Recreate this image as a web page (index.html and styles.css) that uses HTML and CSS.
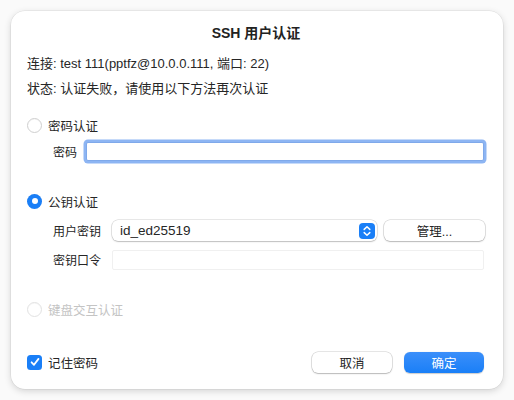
FILE: index.html
```html
<!DOCTYPE html>
<html lang="zh">
<head>
<meta charset="utf-8">
<link rel="stylesheet" href="styles.css">
</head>
<body>
<div class="dialog">
  <div class="title">SSH 用户认证</div>
  <div class="info first">连接: test 111(pptfz@10.0.0.111, 端口: 22)</div>
  <div class="info">状态: 认证失败，请使用以下方法再次认证</div>

  <div class="section s1">
    <div class="choice"><span class="radio"></span><span>密码认证</span></div>
    <div class="field f-pw"><span class="label">密码</span><div class="input focus"></div></div>
  </div>

  <div class="section s2">
    <div class="choice"><span class="radio on"></span><span>公钥认证</span></div>
    <div class="field f-key">
      <span class="label">用户密钥</span>
      <div class="select"><span>id_ed25519</span>
        <span class="stepper"><svg width="16" height="16" viewBox="0 0 16 16"><path d="M5.2 6.4 8 3.8l2.8 2.6M5.2 9.6 8 12.2l2.8-2.6" fill="none" stroke="#fff" stroke-width="1.5" stroke-linecap="round" stroke-linejoin="round"/></svg></span>
      </div>
      <div class="btn manage">管理...</div>
    </div>
    <div class="field f-phrase"><span class="label">密钥口令</span><div class="input plain"></div></div>
  </div>

  <div class="section s3">
    <div class="choice disabled"><span class="radio"></span><span>键盘交互认证</span></div>
  </div>

  <div class="footer">
    <div class="check-row"><span class="checkbox"><svg width="14" height="14" viewBox="0 0 14 14"><path d="M3.6 7.3 6 9.8 10.5 3.9" fill="none" stroke="#fff" stroke-width="1.8" stroke-linecap="round" stroke-linejoin="round"/></svg></span><span>记住密码</span></div>
    <div class="buttons">
      <div class="btn cancel">取消</div>
      <div class="btn ok">确定</div>
    </div>
  </div>
</div>
</body>
</html>
```

FILE: styles.css
```css
* { box-sizing: border-box; }
html, body { margin: 0; padding: 0; background: #fafafa; }
body {
  width: 514px; height: 400px;
  font-family: "Liberation Sans", "Noto Sans CJK SC", sans-serif;
  font-size: 12px;
  color: #262626;
  padding: 11px;
}
.dialog {
  width: 492px; height: 378px;
  background: #fff;
  border-radius: 14px;
  box-shadow: 0 0 0 0.5px rgba(0,0,0,0.08), 0 2px 7px rgba(0,0,0,0.16);
  padding: 14px 18px 17px 16px;
  display: flex; flex-direction: column;
}
.title {
  text-align: center; font-weight: bold; font-size: 14px;
  line-height: 16px; height: 16px; color: #222;
}
.info { height: 20px; line-height: 20px; margin-top: 5px; font-size: 13px; }
.info.first { margin-top: 13px; }
.section { display: flex; flex-direction: column; }
.s1 { margin-top: 16px; }
.s2 { margin-top: 29px; }
.s3 { margin-top: 29px; }
.choice { display: flex; align-items: center; height: 20px; gap: 6px; font-size: 12.5px; }
.radio {
  width: 15px; height: 15px; border-radius: 50%;
  border: 1px solid #cfcfcf; background: #fff;
  box-shadow: inset 0 0.5px 1px rgba(0,0,0,0.05);
}
.radio.on {
  border: none; background: #1a7ff7;
  display: flex; align-items: center; justify-content: center;
}
.radio.on::after {
  content: ""; width: 6px; height: 6px; border-radius: 50%; background: #fff;
}
.choice.disabled { color: #c4c4c4; }
.choice.disabled .radio { border-color: #e2e2e2; }
.field { display: flex; align-items: center; padding-left: 26px; font-size: 12px; }
.f-pw { margin-top: 6px; height: 21px; gap: 9px; }
.f-key { margin-top: 9px; height: 21px; gap: 11px; }
.f-phrase { margin-top: 8px; height: 21px; gap: 11px; }
.label { white-space: nowrap; }
.input { flex: 1; height: 20px; background: #fff; }
.input.focus {
  height: 19px; margin-right: 1px;
  border: 1px solid #7fa9ea;
  box-shadow: 0 0 0 2.5px #8db5f3;
  border-radius: 2px;
}
.input.plain { border: 1px solid #f0f0f0; border-radius: 2px; margin-right: 1px; }
.select {
  width: 265px; height: 21px; flex: none;
  border-radius: 6px; background: #fff;
  box-shadow: 0 0 0 0.5px rgba(0,0,0,0.18), 0 1px 1.5px rgba(0,0,0,0.18);
  display: flex; align-items: center; justify-content: space-between;
  padding: 0 2px 0 8px; font-size: 13.5px;
}
.stepper {
  width: 16px; height: 16px; border-radius: 4px; background: #1a7ff7;
  display: flex;
}
.btn {
  height: 21px; border-radius: 6px;
  display: flex; align-items: center; justify-content: center;
  font-size: 12.5px;
}
.manage, .cancel {
  background: #fff;
  box-shadow: 0 0 0 0.5px rgba(0,0,0,0.2), 0 1px 1.5px rgba(0,0,0,0.2);
}
.manage { width: 101px; margin-left: -4px; }
.footer {
  margin-top: auto; height: 20px;
  display: flex; align-items: center; justify-content: space-between;
  font-size: 12.5px;
}
.check-row { display: flex; align-items: center; gap: 6px; }
.checkbox {
  width: 15px; height: 15px; border-radius: 3.5px; background: #1a7ff7;
  display: flex; align-items: center; justify-content: center;
}
.buttons { display: flex; gap: 12px; margin-right: 1px; }
.cancel { width: 80px; }
.ok {
  width: 80px; color: #fff;
  background: linear-gradient(#3b8ffa, #1a7ff7);
  box-shadow: 0 0.5px 1px rgba(0,0,0,0.2);
}
```
